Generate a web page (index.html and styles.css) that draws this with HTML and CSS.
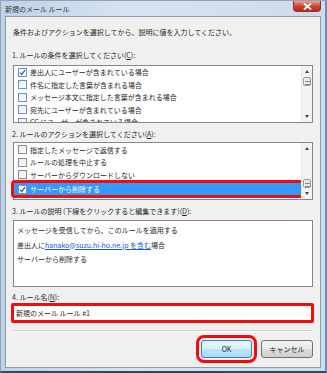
FILE: index.html
```html
<!DOCTYPE html>
<html lang="ja">

<head>
    <meta charset="UTF-8">
    <meta name="viewport" content="width=device-width, initial-scale=1.0">
    <title>新規のメール ルール</title>
    <link rel="stylesheet" href="styles.css">
</head>

<body>
    <div class="window">
        <div class="title-bar">
            <span class="title-text">新規のメール ルール</span>
            <span class="close-btn">
                <svg width="9" height="7" viewBox="0 0 9 7"><path d="M1.5 1 L7.5 6 M7.5 1 L1.5 6" stroke="#fff" stroke-width="1.8" stroke-linecap="round"/></svg>
            </span>
        </div>
        <div class="client">
            <p class="intro">条件およびアクションを選択してから、説明に値を入力してください。</p>

            <p class="label label-1">1. ルールの条件を選択してください(<u>C</u>):</p>
            <div class="list list-conditions">
                <ul class="rows">
                    <li class="row"><span class="check checked"></span>差出人にユーザーが含まれている場合</li>
                    <li class="row"><span class="check"></span>件名に指定した言葉が含まれる場合</li>
                    <li class="row"><span class="check"></span>メッセージ本文に指定した言葉が含まれる場合</li>
                    <li class="row"><span class="check"></span>宛先にユーザーが含まれている場合</li>
                    <li class="row"><span class="check"></span>CC にユーザーが含まれている場合</li>
                </ul>
                <div class="scrollbar">
                    <span class="arrow up"></span>
                    <span class="thumb"></span>
                    <span class="track"></span>
                    <span class="arrow down"></span>
                </div>
            </div>

            <p class="label label-2">2. ルールのアクションを選択してください(<u>A</u>):</p>
            <div class="list list-actions">
                <ul class="rows">
                    <li class="row"><span class="check"></span>指定したメッセージで返信する</li>
                    <li class="row"><span class="check"></span>ルールの処理を中止する</li>
                    <li class="row"><span class="check"></span>サーバーからダウンロードしない</li>
                    <li class="row selected"><span class="check checked"></span>サーバーから削除する</li>
                </ul>
                <div class="scrollbar">
                    <span class="arrow up"></span>
                    <span class="track"></span>
                    <span class="thumb"></span>
                    <span class="arrow down"></span>
                </div>
            </div>

            <p class="label label-3">3. ルールの説明 (下線をクリックすると編集できます)(<u>D</u>):</p>
            <div class="description">
                <p class="desc-line">メッセージを受信してから、このルールを適用する</p>
                <p class="desc-line">差出人に<a class="link">hanako@suzu.hi-ho.ne.jp を含む</a>場合</p>
                <p class="desc-line">サーバーから削除する</p>
            </div>

            <p class="label label-4">4. ルール名(<u>N</u>):</p>
            <div class="name-box">新規のメール ルール #1</div>

            <div class="separator"></div>

            <div class="buttons">
                <span class="btn btn-default">OK</span>
                <span class="btn">キャンセル</span>
            </div>
        </div>
    </div>
</body>

</html>
```

FILE: styles.css
```css
* {
    box-sizing: border-box;
}

body {
    margin: 0;
    font-family: "Noto Sans CJK JP", "Noto Sans", sans-serif;
    font-size: 7px;
    color: #262626;
}

p,
ul {
    margin: 0;
    padding: 0;
}

/* ウィンドウ枠 */
.window {
    width: 327px;
    height: 373px;
    display: flex;
    flex-direction: column;
    padding: 0 4px 3px 4px;
    background: linear-gradient(to right, #bfd2e6, #d7e3ef 40%, #cddbea);
    border: 1px solid #8fa3b8;
    border-right: 2px solid #5d93c9;
    border-bottom: 2px solid #21505e;
}

.title-bar {
    height: 15px;
    display: flex;
    align-items: flex-start;
}

.title-text {
    margin: 3px 0 0 0;
    line-height: 10px;
    color: #333;
}

.close-btn {
    margin-left: auto;
    margin-right: 0;
    width: 28px;
    height: 11px;
    display: flex;
    align-items: center;
    justify-content: center;
    border: 1px solid #8a3a30;
    border-top: none;
    border-radius: 0 0 4px 4px;
    background: linear-gradient(#e9a394, #d0452f 50%, #b9261a);
}

.client {
    flex: 1;
    display: flex;
    flex-direction: column;
    padding: 0 7px;
    background: #f0f0f0;
    border: 1px solid #8b9aac;
}

.intro {
    margin-top: 10px;
    line-height: 10px;
}

.label {
    line-height: 10px;
    margin-left: -1px;
}

.label-1 {
    margin-top: 13px;
}

.label-2,
.label-3 {
    margin-top: 6px;
}

.label-4 {
    margin-top: 5px;
}

/* リストボックス */
.list {
    display: flex;
    height: 58px;
    background: #fff;
    border: 1px solid #828790;
}

.list-conditions {
    margin-top: 5px;
    overflow: hidden;
}

.list-actions {
    margin-top: 3px;
}

.rows {
    flex: 1;
    list-style: none;
}

.list-conditions .row {
    height: 12.5px;
}

.list-actions .rows {
    padding-top: 0.5px;
}

.list-actions .row {
    height: 12.5px;
}

.row {
    display: flex;
    align-items: center;
    padding-left: 4px;
    white-space: nowrap;
}

.check {
    width: 9px;
    height: 9px;
    margin-right: 3px;
    flex-shrink: 0;
    background: linear-gradient(135deg, #e6ebf0, #fff);
    border: 1px solid #6f93be;
}

.list-actions .check {
    border-color: #8c8c8c;
}

.check.checked {
    background: #fff url("data:image/svg+xml,%3Csvg xmlns='http://www.w3.org/2000/svg' width='7' height='7' viewBox='0 0 7 7'%3E%3Cpath d='M1 3.6 L2.8 5.4 L6 1.2' fill='none' stroke='%232a5fa8' stroke-width='1.3'/%3E%3C/svg%3E") center no-repeat;
    border-color: #6f93be;
}

.list-actions .row.selected {
    height: 12px;
    margin-top: 2px;
    background: #3399ff;
    color: #fff;
    outline: 3px solid #f20d0d;
    outline-offset: 0;
    border-radius: 1px;
}

/* スクロールバー */
.scrollbar {
    width: 11px;
    display: flex;
    flex-direction: column;
    background: #f3f3f3;
    border-left: 1px solid #e6e6e6;
}

.arrow {
    height: 11px;
    display: flex;
    align-items: center;
    justify-content: center;
}

.arrow::before {
    content: "";
    border-left: 2.5px solid transparent;
    border-right: 2.5px solid transparent;
}

.arrow.up::before {
    border-bottom: 3px solid #444;
}

.arrow.down::before {
    border-top: 3px solid #444;
}

.track {
    flex: 1;
}

.thumb {
    height: 9px;
    margin: 0 1px;
    border: 1px solid #9a9a9a;
    border-radius: 2px;
    background: repeating-linear-gradient(#e9e9e9 0, #e9e9e9 2px, #8a8a8a 2px, #8a8a8a 3px) center / 5px 6px no-repeat, linear-gradient(to right, #f6f6f6, #dedede);
}

/* 説明 */
.description {
    margin-top: 4px;
    height: 67px;
    padding: 2px 0 0 3px;
    background: #fff;
    border: 1px solid #828790;
}

.desc-line {
    line-height: 14.5px;
}

.link {
    color: #1a56e0;
    text-decoration: underline;
}

.name-box {
    height: 20px;
    margin: 1px -1px 0 -2px;
    padding-left: 2px;
    line-height: 14px;
    background: #fff;
    border: 3px solid #f20d0d;
    border-radius: 2px;
}

.separator {
    margin-top: 7px;
    height: 2px;
    border-top: 1px solid #d0d0d0;
    border-bottom: 1px solid #fff;
}

.buttons {
    margin-top: 8px;
    display: flex;
    justify-content: flex-end;
    gap: 9px;
}

.btn {
    width: 52px;
    height: 18px;
    display: flex;
    align-items: center;
    justify-content: center;
    border: 1px solid #707070;
    border-radius: 3px;
    background: linear-gradient(#f2f2f2 0, #ebebeb 50%, #dddddd 50%, #cfcfcf 100%);
}

.btn-default {
    width: 51px;
    border-color: #3c7fb1;
    background: linear-gradient(#eaf6fd 0, #d9f0fc 50%, #bee6fd 50%, #a7d9f5 100%);
    outline: 3px solid #f20d0d;
    outline-offset: 2px;
}
```
